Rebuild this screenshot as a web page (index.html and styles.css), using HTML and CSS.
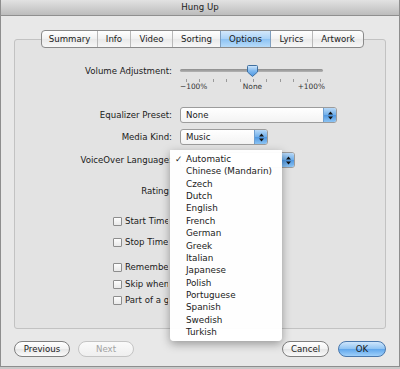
FILE: index.html
```html
<!DOCTYPE html>
<html lang="en">
<head>
  <meta charset="UTF-8" />
  <title>Hung Up</title>
  <link rel="stylesheet" href="styles.css">
</head>
<body>
  <div class="window">
    <div class="titlebar">Hung Up</div>

    <div class="tabview">
      <div class="tabs">
        <div class="tab tab-summary">Summary</div>
        <div class="tab tab-info">Info</div>
        <div class="tab tab-video">Video</div>
        <div class="tab tab-sorting">Sorting</div>
        <div class="tab tab-options active">Options</div>
        <div class="tab tab-lyrics">Lyrics</div>
        <div class="tab tab-artwork">Artwork</div>
      </div>

      <div class="row row-volume">
        <label>Volume Adjustment:</label>
        <div class="slider">
          <div class="track"></div>
          <svg class="thumb" width="11" height="12" viewBox="0 0 11 12">
            <defs>
              <linearGradient id="thumbFill" x1="0" y1="0" x2="0" y2="1">
                <stop offset="0" stop-color="#d4e8fb"/>
                <stop offset="0.5" stop-color="#7db7ee"/>
                <stop offset="1" stop-color="#4b95e0"/>
              </linearGradient>
            </defs>
            <path d="M1.5 0.5 H9.5 Q10.5 0.5 10.5 1.5 V7 L5.5 11.5 L0.5 7 V1.5 Q0.5 0.5 1.5 0.5 Z" fill="url(#thumbFill)" stroke="#3f6f9f" stroke-width="1"/>
          </svg>
        </div>
      </div>
      <div class="row row-ticks">
        <span class="spacer"></span>
        <div class="scale">
          <div class="ticks">
            <i></i><i></i><i></i><i></i><i></i><i></i><i></i><i></i><i></i><i></i><i></i>
          </div>
          <div class="scale-labels">
            <span>−100%</span>
            <span>None</span>
            <span>+100%</span>
          </div>
        </div>
      </div>

      <div class="row row-eq">
        <label>Equalizer Preset:</label>
        <div class="popup popup-eq">
          <span>None</span>
          <span class="stepper"><svg width="5" height="9" viewBox="0 0 5 9"><path d="M2.5 0.5 L5 3.5 H0 Z M2.5 8.5 L5 5.5 H0 Z" fill="#111"/></svg></span>
        </div>
      </div>

      <div class="row row-media">
        <label>Media Kind:</label>
        <div class="popup popup-media">
          <span>Music</span>
          <span class="stepper"><svg width="5" height="9" viewBox="0 0 5 9"><path d="M2.5 0.5 L5 3.5 H0 Z M2.5 8.5 L5 5.5 H0 Z" fill="#111"/></svg></span>
        </div>
      </div>

      <div class="row row-voice">
        <label>VoiceOver Language:</label>
        <div class="popup popup-voice">
          <span></span>
          <span class="stepper"><svg width="5" height="9" viewBox="0 0 5 9"><path d="M2.5 0.5 L5 3.5 H0 Z M2.5 8.5 L5 5.5 H0 Z" fill="#111"/></svg></span>
        </div>
      </div>

      <div class="row row-rating">
        <label>Rating</label>
      </div>

      <div class="check row-start"><span class="box"></span><span class="text">Start Time</span></div>
      <div class="check row-stop"><span class="box"></span><span class="text">Stop Time</span></div>
      <div class="check row-remember"><span class="box"></span><span class="text">Remember playback position</span></div>
      <div class="check row-skip"><span class="box"></span><span class="text">Skip when shuffling</span></div>
      <div class="check row-part"><span class="box"></span><span class="text">Part of a gapless album</span></div>
    </div>

    <div class="buttons">
      <div class="group">
        <button class="btn btn-prev">Previous</button>
        <button class="btn btn-next" disabled>Next</button>
      </div>
      <div class="group">
        <button class="btn btn-cancel">Cancel</button>
        <button class="btn btn-ok">OK</button>
      </div>
    </div>

    <ul class="menu">
      <li class="checked">Automatic</li>
      <li>Chinese (Mandarin)</li>
      <li>Czech</li>
      <li>Dutch</li>
      <li>English</li>
      <li>French</li>
      <li>German</li>
      <li>Greek</li>
      <li>Italian</li>
      <li>Japanese</li>
      <li>Polish</li>
      <li>Portuguese</li>
      <li>Spanish</li>
      <li>Swedish</li>
      <li>Turkish</li>
    </ul>
  </div>
</body>
</html>
```

FILE: styles.css
```css
body {
  margin: 0;
  background: #c9c9c9;
  font-family: "DejaVu Sans", sans-serif;
  font-size: 8.6px;
  color: #1a1a1a;
}

.window {
  position: relative;
  width: 400px;
  height: 367px;
  box-sizing: border-box;
  border: 1px solid #8e8e8e;
  border-top: none;
  background: #e8e8e8;
}

.titlebar {
  height: 15px;
  line-height: 15px;
  text-align: center;
  background: linear-gradient(#e2e2e2, #bcbcbc);
  border-bottom: 1px solid #8f8f8f;
  color: #222;
}

/* tab box */
.tabview {
  margin: 23px 13px 0;
  height: 290px;
  box-sizing: border-box;
  border: 1px solid #c2c2c2;
  border-radius: 3px;
  background: #e3e3e3;
}

.tabs {
  display: flex;
  width: max-content;
  height: 18px;
  margin: -10px 0 0 26px;
  box-sizing: border-box;
  border: 1px solid #8a8a8a;
  border-radius: 4px;
  background: linear-gradient(#ffffff, #f1f1f1 50%, #e9e9e9 51%, #f7f7f7);
  overflow: hidden;
}

.tab {
  line-height: 16px;
  text-align: center;
  border-left: 1px solid #b9b9b9;
}

.tab:first-child {
  border-left: none;
}

.tab-summary { width: 55px; }
.tab-info { width: 32px; }
.tab-video { width: 41px; }
.tab-sorting { width: 47px; }
.tab-options { width: 49px; }
.tab-lyrics { width: 41px; }
.tab-artwork { width: 50px; }

.tab.active {
  background: linear-gradient(#d3e8fb, #a9d2f7 50%, #8cc2f3 51%, #b7dcfa);
  border-left-color: #7f9fc0;
}

.tab.active + .tab {
  border-left-color: #7f9fc0;
}

/* form rows */
.row {
  display: flex;
  align-items: center;
  gap: 8px;
}

.row label,
.row .spacer {
  width: 157px;
  flex: none;
  text-align: right;
}

.row-volume { margin-top: 16px; height: 14px; }
.row-ticks { height: 15px; align-items: flex-start; }
.row-eq { margin-top: 14px; height: 16px; }
.row-media { margin-top: 6px; height: 16px; }
.row-voice { margin-top: 7px; height: 16px; }
.row-rating { margin-top: 16px; height: 14px; }

.row-rating label {
  width: 154px;
}

.slider {
  position: relative;
  width: 143px;
  height: 14px;
}

.track {
  margin-top: 5px;
  height: 3px;
  border-radius: 2px;
  background: linear-gradient(#8c8c8c, #b4b4b4);
}

.thumb {
  position: absolute;
  left: 67px;
  top: 1px;
}

.scale {
  width: 145px;
}

.ticks {
  display: flex;
  justify-content: space-between;
  padding: 1px 4px 0 6px;
}

.ticks i {
  width: 1px;
  height: 3px;
  background: #9a9a9a;
}

.scale-labels {
  display: flex;
  justify-content: space-between;
  font-size: 7.4px;
  line-height: 10px;
  color: #333;
}

.popup {
  display: flex;
  align-items: center;
  height: 16px;
  box-sizing: border-box;
  border: 1px solid #9c9c9c;
  border-radius: 3px;
  background: linear-gradient(#ffffff, #f3f3f3);
  padding-left: 5px;
}

.popup span:first-child {
  flex: 1;
}

.stepper {
  display: flex;
  align-items: center;
  justify-content: center;
  width: 12px;
  height: 14px;
  border-left: 1px solid #6f9fd0;
  border-radius: 0 2px 2px 0;
  background: linear-gradient(#b8d9f8, #6eaeea 50%, #4f97e1 51%, #8cc4f4);
}

.popup-eq { width: 157px; }
.popup-media { width: 88px; }
.popup-voice { width: 115px; }

/* checkboxes */
.check {
  display: flex;
  align-items: center;
  gap: 3px;
  height: 14px;
  padding-left: 98px;
}

.check .text {
  max-width: 43px;
  overflow: hidden;
  white-space: nowrap;
}

.box {
  width: 9px;
  height: 9px;
  flex: none;
  box-sizing: border-box;
  border: 1px solid #8d8d8d;
  border-radius: 1px;
  background: linear-gradient(#fdfdfd, #e9e9e9);
}

.row-start { margin-top: 16px; }
.row-stop { margin-top: 7px; }
.row-remember { margin-top: 11px; }
.row-skip { margin-top: 3px; }
.row-part { margin-top: 2px; }

/* bottom buttons */
.buttons {
  display: flex;
  justify-content: space-between;
  margin-top: 12px;
  padding: 0 13px;
}

.group {
  display: flex;
  gap: 8px;
}

.btn {
  height: 16px;
  padding: 0;
  font-family: inherit;
  font-size: 8.6px;
  color: #1a1a1a;
  border: 1px solid #7f7f7f;
  border-radius: 8px;
  background: linear-gradient(#ffffff, #f2f2f2 50%, #e6e6e6 51%, #fafafa);
}

.btn-prev, .btn-next { width: 56px; }
.btn-cancel { width: 47px; }
.btn-ok { width: 48px; margin-left: 1px; }

.btn-next {
  color: #a3a3a3;
  border-color: #c4c4c4;
  background: linear-gradient(#fafafa, #efefef);
}

.btn-ok {
  border-color: #4a78ad;
  background: linear-gradient(#cfe6fc, #8ec3f3 50%, #5fa6ec 51%, #9fd0fa);
}

/* open popup menu */
.menu {
  position: absolute;
  left: 169px;
  top: 150px;
  width: 112px;
  margin: 0;
  padding: 3px 0;
  list-style: none;
  background: rgba(255, 255, 255, 0.97);
  border-radius: 0 0 4px 4px;
  box-shadow: 0 3px 10px rgba(0, 0, 0, 0.35);
}

.menu li {
  height: 12.36px;
  line-height: 12.36px;
  padding-left: 16px;
  font-size: 8.8px;
  white-space: nowrap;
}

.menu li.checked {
  position: relative;
}

.menu li.checked::before {
  content: "✓";
  position: absolute;
  left: 5px;
}
```
